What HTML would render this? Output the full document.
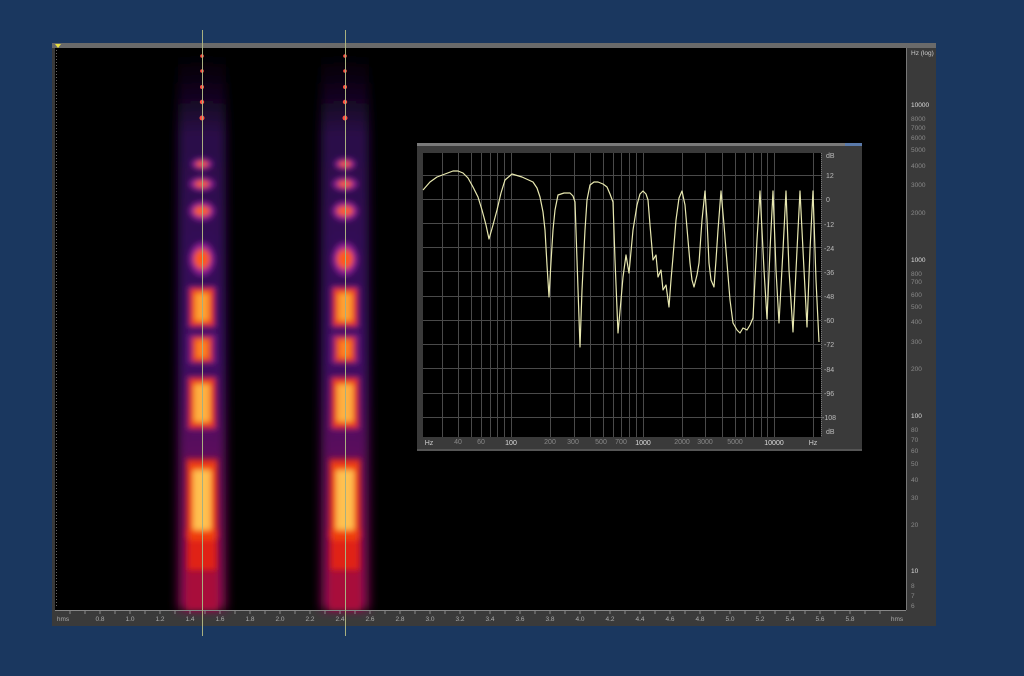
<!DOCTYPE html>
<html><head><meta charset="utf-8"><style>
html,body{margin:0;padding:0;background:#1a375f;width:1024px;height:676px;overflow:hidden}
svg{display:block}
text{font-family:"Liberation Sans",sans-serif}
</style></head><body>
<svg width="1024" height="676" viewBox="0 0 1024 676" xmlns="http://www.w3.org/2000/svg">
<defs>
<filter id="b1" x="-50%" y="-10%" width="200%" height="120%"><feGaussianBlur stdDeviation="3"/></filter>
<filter id="b2" x="-50%" y="-10%" width="200%" height="120%"><feGaussianBlur stdDeviation="5"/></filter>
<linearGradient id="haze" x1="0" y1="0" x2="0" y2="1">
<stop offset="0" stop-color="#1a0828" stop-opacity="0"/>
<stop offset="0.15" stop-color="#2a0c48"/>
<stop offset="0.55" stop-color="#3c0f62"/>
<stop offset="0.8" stop-color="#6a0c5a"/>
<stop offset="1" stop-color="#8a0a50"/>
</linearGradient>
<g id="col">
<rect x="-24" y="50" width="48" height="560" fill="url(#haze)" filter="url(#b2)"/>
<rect x="-16" y="530" width="32" height="80" fill="#a8103a" filter="url(#b1)"/>
<g filter="url(#b1)">
<ellipse cx="0" cy="164" rx="11" ry="6" fill="#8a1a90"/>
<ellipse cx="0" cy="184" rx="13" ry="7" fill="#8a1a90"/>
<ellipse cx="0" cy="211" rx="13" ry="10" fill="#8a1a90"/>
<ellipse cx="0" cy="259" rx="13" ry="17" fill="#8a1a90"/>
<rect x="-14" y="286" width="28" height="42" fill="#8a1a80"/>
<rect x="-14" y="334" width="28" height="30" fill="#7a1a80"/>
<rect x="-15" y="376" width="30" height="54" fill="#8a1a70"/>
<rect x="-16" y="458" width="32" height="80" fill="#c01a30"/>
<rect x="-12" y="288" width="24" height="38" fill="#e83018"/>
<rect x="-10" y="337" width="20" height="25" fill="#e03018"/>
<rect x="-13" y="378" width="26" height="50" fill="#e83018"/>
<rect x="-14" y="462" width="28" height="78" fill="#f04010"/>
<ellipse cx="0" cy="164" rx="6" ry="3" fill="#ff6020"/>
<ellipse cx="0" cy="184" rx="7" ry="3.5" fill="#ff6020"/>
<ellipse cx="0" cy="211" rx="8" ry="5" fill="#ff6020"/>
<ellipse cx="0" cy="259" rx="8" ry="10" fill="#ff5a18"/>
<rect x="-7" y="293" width="14" height="28" fill="#ffa030"/>
<rect x="-6" y="340" width="12" height="18" fill="#ff8020"/>
<rect x="-8" y="384" width="16" height="38" fill="#ffb040"/>
<rect x="-9" y="470" width="18" height="60" fill="#ffc050"/>
<rect x="-14" y="540" width="28" height="30" fill="#e02018"/>
</g>
<g fill="#ff5040">
<circle cx="0" cy="56" r="1.8"/><circle cx="0" cy="71" r="1.8"/><circle cx="0" cy="87" r="2"/><circle cx="0" cy="102" r="2.2"/><circle cx="0" cy="118" r="2.5"/>
</g>
</g>
</defs>

<rect x="52" y="43" width="884" height="583" fill="#3a3a3a"/>
<rect x="52" y="43" width="884" height="5" fill="#6a6a6a"/>
<rect x="55" y="48" width="851" height="562" fill="#000"/>
<line x1="56.5" y1="50" x2="56.5" y2="608" stroke="#666" stroke-dasharray="1 2"/>
<polygon points="55,44 61,44 58,48" fill="#e8e040"/>

<use href="#col" x="202" y="0"/>
<use href="#col" x="345" y="0"/>

<line x1="906.5" y1="48" x2="906.5" y2="610" stroke="#777"/>
<g font-size="6.5" fill="#8a8a8a">
<text x="911" y="55" fill="#ccc">Hz (log)</text>
<text x="911" y="107" fill="#ddd">10000</text>
<text x="911" y="121">8000</text><text x="911" y="130">7000</text><text x="911" y="140">6000</text>
<text x="911" y="152">5000</text><text x="911" y="168">4000</text><text x="911" y="187">3000</text>
<text x="911" y="215">2000</text><text x="911" y="262" fill="#ddd">1000</text>
<text x="911" y="276">800</text><text x="911" y="284">700</text><text x="911" y="297">600</text>
<text x="911" y="309">500</text><text x="911" y="324">400</text><text x="911" y="344">300</text>
<text x="911" y="371">200</text><text x="911" y="418" fill="#ddd">100</text>
<text x="911" y="432">80</text><text x="911" y="442">70</text><text x="911" y="453">60</text>
<text x="911" y="466">50</text><text x="911" y="482">40</text><text x="911" y="500">30</text>
<text x="911" y="527">20</text><text x="911" y="573" fill="#ddd">10</text>
<text x="911" y="588">8</text><text x="911" y="598">7</text><text x="911" y="608">6</text>
</g>

<line x1="55" y1="610.5" x2="906" y2="610.5" stroke="#888"/>
<g font-size="6.5" fill="#aaa" text-anchor="middle">
<text x="63" y="621">hms</text>
<text x="100" y="621">0.8</text><text x="130" y="621">1.0</text><text x="160" y="621">1.2</text><text x="190" y="621">1.4</text>
<text x="220" y="621">1.6</text><text x="250" y="621">1.8</text><text x="280" y="621">2.0</text><text x="310" y="621">2.2</text>
<text x="340" y="621">2.4</text><text x="370" y="621">2.6</text><text x="400" y="621">2.8</text><text x="430" y="621">3.0</text>
<text x="460" y="621">3.2</text><text x="490" y="621">3.4</text><text x="520" y="621">3.6</text><text x="550" y="621">3.8</text>
<text x="580" y="621">4.0</text><text x="610" y="621">4.2</text><text x="640" y="621">4.4</text><text x="670" y="621">4.6</text>
<text x="700" y="621">4.8</text><text x="730" y="621">5.0</text><text x="760" y="621">5.2</text><text x="790" y="621">5.4</text>
<text x="820" y="621">5.6</text><text x="850" y="621">5.8</text><text x="897" y="621">hms</text>
</g>
<path d="M70 611v3M85 611v3M100 611v3M115 611v3M130 611v3M145 611v3M160 611v3M175 611v3M190 611v3M205 611v3M220 611v3M235 611v3M250 611v3M265 611v3M280 611v3M295 611v3M310 611v3M325 611v3M340 611v3M355 611v3M370 611v3M385 611v3M400 611v3M415 611v3M430 611v3M445 611v3M460 611v3M475 611v3M490 611v3M505 611v3M520 611v3M535 611v3M550 611v3M565 611v3M580 611v3M595 611v3M610 611v3M625 611v3M640 611v3M655 611v3M670 611v3M685 611v3M700 611v3M715 611v3M730 611v3M745 611v3M760 611v3M775 611v3M790 611v3M805 611v3M820 611v3M835 611v3M850 611v3M865 611v3M880 611v3" stroke="#888"/>

<rect x="202" y="30" width="1" height="606" fill="#a8b080"/>
<rect x="345" y="30" width="1" height="606" fill="#a8b080"/>

<rect x="417" y="143" width="445" height="308" fill="#3a3a3a"/>
<rect x="417" y="143" width="445" height="3" fill="#7a7a7a"/>
<rect x="845" y="143" width="17" height="3" fill="#5a7aaa"/>
<rect x="417" y="449" width="445" height="2" fill="#555"/>
<rect x="423" y="153" width="398" height="284" fill="#000"/>
<g stroke="#4a4a4a" stroke-width="1">
<path d="M423 175.5H821M423 199.5H821M423 223.5H821M423 247.5H821M423 271.5H821M423 296.5H821M423 320.5H821M423 344.5H821M423 368.5H821M423 393.5H821M423 417.5H821"/>
<path d="M442.5 153v284M458.5 153v284M471.5 153v284M481.5 153v284M490.5 153v284M497.5 153v284M504.5 153v284M511.5 153v284M550.5 153v284M574.5 153v284M590.5 153v284M603.5 153v284M613.5 153v284M621.5 153v284M629.5 153v284M636.5 153v284M643.5 153v284M682.5 153v284M705.5 153v284M722.5 153v284M735.5 153v284M745.5 153v284M753.5 153v284M761.5 153v284M767.5 153v284M774.5 153v284M813.5 153v284"/>
</g>
<line x1="821.5" y1="153" x2="821.5" y2="437" stroke="#777" stroke-dasharray="1 1"/>
<polyline fill="none" stroke="#e8e8b0" stroke-width="1.2" stroke-linejoin="round" points="423,190 430,182 437,177 445,174 453,171 458,171 463,173 468,178 473,187 478,197 482,210 486,225 489,239 493,225 497,210 501,193 505,180 512,174 522,177 533,182 537,188 540,197 543,212 545,230 547,265 549,297 551,262 553,230 555,210 558,195 564,193 570,193 573,196 575,202 577,260 580,347 582,290 585,230 587,200 590,185 594,182 598,182 603,184 607,187 610,194 613,202 615,260 618,333 621,300 623,277 626,255 629,273 633,230 637,205 640,194 643,191 646,194 648,200 650,225 653,260 656,255 658,277 661,270 663,290 666,285 669,307 671,280 673,257 676,220 679,198 682,191 685,205 688,240 690,263 692,280 694,287 697,275 699,263 702,220 705,191 707,220 709,263 711,280 714,287 716,260 718,230 721,191 724,225 727,263 730,300 733,323 737,330 740,333 743,328 747,330 750,325 753,318 757,240 760,191 764,270 767,319 770,250 773,191 776,270 779,323 783,250 786,191 789,270 793,332 797,250 800,191 804,270 807,327 810,250 813,191 816,280 819,342"/>
<g font-size="7" fill="#bbb">
<text x="826" y="158">dB</text><text x="826" y="178">12</text><text x="826" y="202">0</text>
<text x="824" y="227">-12</text><text x="824" y="251">-24</text><text x="824" y="275">-36</text>
<text x="824" y="299">-48</text><text x="824" y="323">-60</text><text x="824" y="347">-72</text>
<text x="824" y="372">-84</text><text x="824" y="396">-96</text><text x="822" y="420">-108</text>
<text x="826" y="434">dB</text>
</g>
<g font-size="7" fill="#888" text-anchor="middle">
<text x="429" y="445" fill="#ccc">Hz</text><text x="458" y="444">40</text><text x="481" y="444">60</text>
<text x="511" y="445" fill="#ddd">100</text><text x="550" y="444">200</text><text x="573" y="444">300</text>
<text x="601" y="444">500</text><text x="621" y="444">700</text><text x="643" y="445" fill="#ddd">1000</text>
<text x="682" y="444">2000</text><text x="705" y="444">3000</text><text x="735" y="444">5000</text>
<text x="774" y="445" fill="#ddd">10000</text><text x="813" y="445" fill="#ccc">Hz</text>
</g>
</svg>
</body></html>
